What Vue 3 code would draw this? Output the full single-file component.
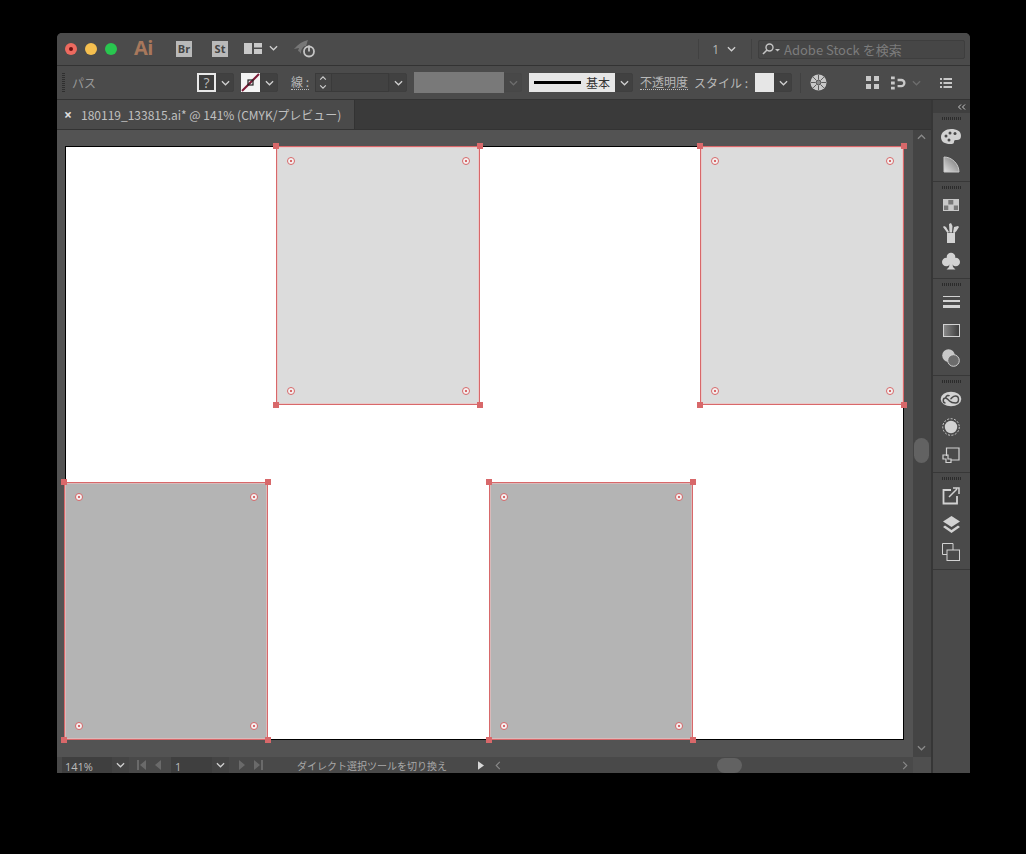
<template>
  <div class="page">
    <div class="window">
      <header class="titlebar">
        <div class="lights">
          <span class="light red"><i></i></span>
          <span class="light yellow"></span>
          <span class="light green"></span>
        </div>
        <span class="ai">Ai</span>
        <span class="app-badge br">Br</span>
        <span class="app-badge st">St</span>
        <svg class="workspace" viewBox="0 0 18 12"><path d="M0 1h8v11H0zM10 1h8v4.500h-8zM10 7h8v5h-8z" /></svg>
        <svg class="chev wsp-chev" viewBox="0 0 10 6"><path d="M1 1l4 4 4-4" /></svg>
        <svg class="rocket" viewBox="0 0 24 20">
          <path d="M1 10C5 5 10 2 15 1c-1 2-1 4-2 6-2 0-3 1-4 3-1 1-1 3-1 5-1-2-2-3-3-3l1-3z" fill="#777" />
          <circle cx="16" cy="12.500" r="5" fill="none" stroke="#c4c4c4" stroke-width="1.800" />
          <path d="M16 6.500v6" stroke="#c4c4c4" stroke-width="1.800" />
        </svg>
        <div class="title-right">
          <span class="vsep"></span>
          <span class="doc-count">1</span>
          <svg class="chev" viewBox="0 0 10 6"><path d="M1 1l4 4 4-4" /></svg>
          <span class="vsep second"></span>
          <label class="search">
            <svg class="search-icon" viewBox="0 0 18 12">
              <circle cx="7.500" cy="4.500" r="3.500" fill="none" stroke="#c4c4c4" stroke-width="1.400" />
              <path d="M5 7l-4 4" stroke="#c4c4c4" stroke-width="1.600" />
              <path d="M13 6h5l-2.500 2.500z" fill="#c4c4c4" />
            </svg>
            <span>Adobe Stock を検索</span>
          </label>
        </div>
      </header>

      <div class="controlbar">
        <span class="grip"></span>
        <span class="path-label">パス</span>
        <span class="fill-box">?</span>
        <span class="select-btn"><svg class="chev" viewBox="0 0 10 6"><path d="M1 1l4 4 4-4" /></svg></span>
        <span class="stroke-box">
          <svg viewBox="0 0 19 19">
            <path d="M1 18L18 1" stroke="#7c1a36" stroke-width="2" />
            <rect x="7" y="7" width="5" height="5" fill="none" stroke="#222" stroke-width="1.200" />
          </svg>
        </span>
        <span class="select-btn"><svg class="chev" viewBox="0 0 10 6"><path d="M1 1l4 4 4-4" /></svg></span>
        <span class="dotted stroke-label">線 :</span>
        <span class="spinner">
          <svg viewBox="0 0 10 18"><path d="M2 6l3-3 3 3M2 12l3 3 3-3" /></svg>
        </span>
        <span class="stroke-input"></span>
        <span class="select-btn"><svg class="chev" viewBox="0 0 10 6"><path d="M1 1l4 4 4-4" /></svg></span>
        <span class="profile-box"></span>
        <span class="select-btn disabled"><svg class="chev" viewBox="0 0 10 6"><path d="M1 1l4 4 4-4" /></svg></span>
        <span class="brush-box"><i></i><b>基本</b></span>
        <span class="select-btn"><svg class="chev" viewBox="0 0 10 6"><path d="M1 1l4 4 4-4" /></svg></span>
        <span class="dotted opacity-label">不透明度</span>
        <span class="style-label">スタイル :</span>
        <span class="style-box"></span>
        <span class="select-btn"><svg class="chev" viewBox="0 0 10 6"><path d="M1 1l4 4 4-4" /></svg></span>
        <span class="vsep bar-sep"></span>
        <svg class="globe" viewBox="0 0 18 18">
          <circle cx="9" cy="9" r="8.500" fill="#c8c8c8" />
          <g stroke="#555" stroke-width="1">
            <circle cx="9" cy="9" r="2.500" fill="#8a8a8a" />
            <path d="M9 1v5M9 12v5M1 9h5M12 9h5M3.300 3.300l3.500 3.500M11.200 11.200l3.500 3.500M14.700 3.300l-3.500 3.500M6.800 11.200l-3.500 3.500" />
          </g>
        </svg>
        <svg class="align-a" viewBox="0 0 14 14">
          <path d="M0 0h5v5H0zM8 0h5v5H8zM0 8h5v5H0zM8 8h5v5H8z" fill="#c8c8c8" />
          <path d="M6.500 0v14M0 6.500h14" stroke="#4a4a4a" stroke-width="1" />
        </svg>
        <svg class="align-b" viewBox="0 0 16 14">
          <path d="M0 0h4v3H0zM0 5.500h4v3H0zM0 11h4v3H0z" fill="#c8c8c8" />
          <path d="M7 2.500h4a4.500 4.500 0 0 1 0 9H7v-2.500h4a2 2 0 0 0 0-4H7z" fill="#c8c8c8" />
        </svg>
        <svg class="chev dim-chev" viewBox="0 0 10 6"><path d="M1 1l4 4 4-4" /></svg>
        <svg class="menu-icon" viewBox="0 0 12 10">
          <path d="M0 0h2v2H0zM0 4h2v2H0zM0 8h2v2H0zM3.500 0H12v2H3.500zM3.500 4H12v2H3.500zM3.500 8H12v2H3.500z" fill="#c8c8c8" />
        </svg>
      </div>

      <div class="workarea">
        <div class="doc-column">
          <div class="tabs">
            <div class="tab">
              <span class="tab-close">×</span>
              <span>180119_133815.ai* @ 141% (CMYK/プレビュー)</span>
            </div>
          </div>

          <div class="view-row">
            <div class="canvas">
              <div class="artboard">
                <div
                  v-for="shape in shapes"
                  :key="shape.id"
                  class="shape"
                  :class="shape.tone"
                  :style="{ left: shape.x + 'px', top: shape.y + 'px' }"
                >
                  <span class="handle tl"></span>
                  <span class="handle tr"></span>
                  <span class="handle bl"></span>
                  <span class="handle br-h"></span>
                  <span class="widget w-tl"></span>
                  <span class="widget w-tr"></span>
                  <span class="widget w-bl"></span>
                  <span class="widget w-br"></span>
                </div>
              </div>
            </div>
            <div class="v-scroll">
              <svg class="chev scroll-up" viewBox="0 0 10 6"><path d="M1 5l4-4 4 4" /></svg>
              <span class="v-thumb"></span>
              <svg class="chev scroll-down" viewBox="0 0 10 6"><path d="M1 1l4 4 4-4" /></svg>
            </div>
          </div>

          <footer class="statusbar">
            <span class="zoom-field">141%</span>
            <span class="status-btn"><svg class="chev" viewBox="0 0 10 6"><path d="M1 1l4 4 4-4" /></svg></span>
            <svg class="nav-icon nav-prev" viewBox="0 0 26 10"><path d="M0 0h2v10H0zM9 0v10L3 5zM24 0v10l-6-5z" /></svg>
            <span class="page-field">1</span>
            <span class="status-btn"><svg class="chev" viewBox="0 0 10 6"><path d="M1 1l4 4 4-4" /></svg></span>
            <svg class="nav-icon nav-next" viewBox="0 0 26 10"><path d="M0 0v10l6-5zM15 0v10l6-5zM22 0h2v10h-2z" /></svg>
            <span class="status-text">ダイレクト選択ツールを切り換え</span>
            <svg class="status-play" viewBox="0 0 7 10"><path d="M0 0l7 5-7 5z" /></svg>
            <div class="h-scroll">
              <svg class="side-chev" viewBox="0 0 6 10"><path d="M5 1L1 5l4 4" /></svg>
              <span class="h-thumb"></span>
              <svg class="side-chev" viewBox="0 0 6 10"><path d="M1 1l4 4-4 4" /></svg>
            </div>
            <span class="corner"></span>
          </footer>
        </div>

        <aside class="panel-dock">
          <div class="dock-top">
            <svg viewBox="0 0 9 6"><path d="M4 0.500L1.500 3 4 5.500M8 0.500L5.500 3 8 5.500" /></svg>
          </div>

          <div class="dock-group">
            <span class="grip-h"></span>
            <div class="dock-icon">
              <svg width="20" height="17" viewBox="0 0 20 17">
                <path d="M0 9C0 4 5 1 10 1c6 0 10 2 10 7 0 3-2 4-4 4s-3 0-3 2-2 2-4 2C4 16 0 14 0 9z" fill="#d2d2d2" />
                <circle cx="5" cy="8" r="1.500" fill="#4a4a4a" />
                <circle cx="9" cy="5" r="1.500" fill="#4a4a4a" />
                <circle cx="14" cy="5.500" r="1.500" fill="#4a4a4a" />
                <circle cx="8" cy="12" r="1.500" fill="#4a4a4a" />
              </svg>
            </div>
            <div class="dock-icon">
              <svg width="17" height="17" viewBox="0 0 17 17">
                <defs>
                  <linearGradient id="wheel" x1="0" y1="1" x2="1" y2="0">
                    <stop offset="0" stop-color="#e0e0e0" />
                    <stop offset="1" stop-color="#6e6e6e" />
                  </linearGradient>
                </defs>
                <path d="M1 1c8 0 15 7 15 15H1z" fill="url(#wheel)" stroke="#c8c8c8" stroke-width="1" />
              </svg>
            </div>
          </div>

          <div class="dock-group">
            <span class="grip-h"></span>
            <div class="dock-icon">
              <svg width="16" height="12" viewBox="0 0 16 12">
                <path d="M0 0h16v12H0z" fill="#c8c8c8" />
                <path d="M5.300 1h5v4.500h-5zM1 6.500h4.300V11H1zM10.800 6.500H15V11h-4.200z" fill="#777" />
              </svg>
            </div>
            <div class="dock-icon">
              <svg width="16" height="20" viewBox="0 0 16 20">
                <path d="M4 10h8v10H4z" fill="#d2d2d2" />
                <path d="M4.500 10L0 4l1-1 2 1 3 5zM6.500 9.500L6 1l2-1 1.500 3L9 9.500zM10 9.500L11 4l4-1 1 1-2.500 4-2 2z" fill="#d2d2d2" />
              </svg>
            </div>
            <div class="dock-icon">
              <svg width="18" height="18" viewBox="0 0 18 18">
                <circle cx="9" cy="5" r="4.300" fill="#d2d2d2" />
                <circle cx="4.300" cy="10" r="4.300" fill="#d2d2d2" />
                <circle cx="13.700" cy="10" r="4.300" fill="#d2d2d2" />
                <path d="M8 9h2l1 6 2.500 2.500h-9L7 15z" fill="#d2d2d2" />
              </svg>
            </div>
          </div>

          <div class="dock-group">
            <span class="grip-h"></span>
            <div class="dock-icon">
              <svg width="17" height="12" viewBox="0 0 17 12">
                <path d="M0 0h17v1H0zM0 4h17v2H0zM0 9h17v3H0z" fill="#d2d2d2" />
              </svg>
            </div>
            <div class="dock-icon">
              <svg width="17" height="13" viewBox="0 0 17 13">
                <defs>
                  <linearGradient id="grad" x1="0" x2="1" y1="0" y2="0">
                    <stop offset="0" stop-color="#8a8a8a" />
                    <stop offset="1" stop-color="#3c3c3c" />
                  </linearGradient>
                </defs>
                <rect x="0.500" y="0.500" width="16" height="12" fill="url(#grad)" stroke="#d2d2d2" />
              </svg>
            </div>
            <div class="dock-icon">
              <svg width="18" height="18" viewBox="0 0 18 18">
                <circle cx="6.500" cy="6.500" r="6.300" fill="#c8c8c8" />
                <circle cx="11.500" cy="11.500" r="5.800" fill="#6c6c6c" stroke="#d2d2d2" stroke-width="1" />
              </svg>
            </div>
          </div>

          <div class="dock-group">
            <span class="grip-h"></span>
            <div class="dock-icon">
              <svg width="22" height="16" viewBox="0 0 22 16">
                <ellipse cx="11" cy="8" rx="10.300" ry="7.300" fill="#d2d2d2" />
                <path d="M5.500 12c-3 0-3-5 0-5 1 0 2 1 4 3s3 2 6 2c4 0 4-7 0-7-3 0-3 2-5 3M9.500 5c-1-1-3-1-4 2" fill="none" stroke="#4a4a4a" stroke-width="1.500" />
              </svg>
            </div>
            <div class="dock-icon">
              <svg width="18" height="18" viewBox="0 0 18 18">
                <circle cx="9" cy="9" r="6.200" fill="#d2d2d2" />
                <circle cx="9" cy="9" r="8.300" fill="none" stroke="#c8c8c8" stroke-width="1" stroke-dasharray="2 1.500" />
              </svg>
            </div>
            <div class="dock-icon">
              <svg width="18" height="16" viewBox="0 0 18 16">
                <path d="M4.500 9V1H17v12H9" fill="none" stroke="#d2d2d2" stroke-width="1.200" />
                <path d="M1 8h5v4h3v3.500H4V12H1z" fill="none" stroke="#d2d2d2" stroke-width="1.200" />
              </svg>
            </div>
          </div>

          <div class="dock-group">
            <span class="grip-h"></span>
            <div class="dock-icon">
              <svg width="18" height="18" viewBox="0 0 18 18">
                <path d="M9 3H1.500v13.500H15V9" fill="none" stroke="#d2d2d2" stroke-width="1.800" />
                <path d="M7 10L15 2M11 1h6v6" fill="none" stroke="#d2d2d2" stroke-width="1.500" />
              </svg>
            </div>
            <div class="dock-icon">
              <svg width="17" height="17" viewBox="0 0 17 17">
                <path d="M8.500 0L17 5.500 8.500 11 0 5.500z" fill="#d2d2d2" />
                <path d="M2 9.500l6.500 4.500 6.500-4.500 2 1.500-8.500 6L0 11z" fill="#d2d2d2" />
              </svg>
            </div>
            <div class="dock-icon">
              <svg width="18" height="18" viewBox="0 0 18 18">
                <path d="M5 11.500H0.500V0.500H11V7" fill="none" stroke="#d2d2d2" stroke-width="1" />
                <rect x="5" y="7" width="12.500" height="10.500" fill="none" stroke="#d2d2d2" stroke-width="1" />
              </svg>
            </div>
          </div>
        </aside>
      </div>
    </div>
  </div>
</template>

<script setup>
const shapes = [
  { id: 1, x: 210, y: -1, tone: 'tone-pale' },
  { id: 2, x: 634, y: -1, tone: 'tone-pale' },
  { id: 3, x: -2, y: 335, tone: 'tone-mid' },
  { id: 4, x: 423, y: 335, tone: 'tone-mid' }
]
</script>

<style>
html,
body {
  margin: 0;
  background: #000;
}
</style>

<style scoped>
.page {
  width: 1026px;
  height: 854px;
  padding: 33px 56px 0 57px;
  box-sizing: border-box;
  background: #000;
  font-family: "Noto Sans CJK JP", "Open Sans", sans-serif;
  color: #b8b8b8;
  overflow: hidden;
}
.window {
  width: 913px;
  height: 740px;
  border-radius: 5px 5px 0 0;
  overflow: hidden;
  background: #4a4a4a;
  display: flex;
  flex-direction: column;
}
svg {
  display: block;
  flex: none;
}
.chev {
  width: 9px;
  height: 6px;
}
.chev path {
  fill: none;
  stroke: #d0d0d0;
  stroke-width: 1.400;
}

/* title bar */
.titlebar {
  height: 33px;
  box-sizing: border-box;
  display: flex;
  align-items: center;
  flex: none;
  border-bottom: 1px solid #333;
  background: #4b4b4b;
}
.lights {
  display: flex;
  gap: 8px;
  margin-left: 8px;
}
.light {
  width: 12px;
  height: 12px;
  border-radius: 50%;
  display: flex;
  align-items: center;
  justify-content: center;
}
.light i {
  width: 4px;
  height: 4px;
  border-radius: 50%;
  background: #6e0f10;
}
.red { background: #ed6a5f; }
.yellow { background: #f5bf4f; }
.green { background: #29c64f; }
.ai {
  margin: -4px 0 0 17px;
  width: 22px;
  font: 700 20px "Open Sans", sans-serif;
  color: #a8785c;
  letter-spacing: -0.500px;
}
.app-badge {
  width: 16px;
  height: 16px;
  background: #b9b9b9;
  color: #444;
  font: 700 11px/16px "Open Sans", sans-serif;
  text-align: center;
}
.br { margin-left: 20px; }
.st { margin-left: 20px; }
.workspace {
  width: 18px;
  height: 12px;
  margin: -3px 0 0 16px;
  fill: #c9c9c9;
}
.wsp-chev {
  margin: -3px 0 0 7px;
}
.rocket {
  width: 24px;
  height: 20px;
  margin-left: 15px;
}
.title-right {
  margin-left: auto;
  display: flex;
  align-items: center;
  padding-right: 5px;
}
.vsep {
  width: 1px;
  height: 20px;
  background: #414141;
}
.doc-count {
  margin: 0 8px 0 13px;
  font: 12px "Open Sans", sans-serif;
  color: #b8b8b8;
}
.vsep.second {
  margin-left: 15px;
}
.search {
  width: 207px;
  height: 19px;
  margin-left: 6px;
  box-sizing: border-box;
  display: flex;
  align-items: center;
  border: 1px solid #3e3e3e;
  border-radius: 2px;
  background: #464646;
  color: #7c7c7c;
  font-size: 13px;
}
.search-icon {
  width: 18px;
  height: 12px;
  margin: 0 4px 0 3px;
}

/* control bar */
.controlbar {
  height: 34px;
  box-sizing: border-box;
  display: flex;
  align-items: center;
  flex: none;
  padding-left: 5px;
  border-bottom: 1px solid #333;
  background: #4b4b4b;
  font-size: 12px;
}
.grip {
  width: 3px;
  height: 20px;
  background: repeating-linear-gradient(#2f2f2f 0 1px, transparent 1px 2px);
}
.path-label {
  margin-left: 7px;
  width: 125px;
  color: #999;
}
.fill-box {
  width: 19px;
  height: 19px;
  box-sizing: border-box;
  border: 2px solid #e8e8e8;
  background: #3d3d3d;
  color: #bbb;
  font: 14px/15px "Open Sans", sans-serif;
  text-align: center;
}
.select-btn {
  width: 18px;
  height: 19px;
  box-sizing: border-box;
  display: flex;
  align-items: center;
  justify-content: center;
  border: 1px solid #3f3f3f;
  border-radius: 0 2px 2px 0;
  background: #414141;
}
.select-btn.disabled {
  border-color: #474747;
  background: #484848;
}
.select-btn.disabled .chev path {
  stroke: #6d6d6d;
}
.stroke-box {
  width: 19px;
  height: 19px;
  margin-left: 7px;
  background: #f4f4f4;
}
.stroke-box svg {
  width: 19px;
  height: 19px;
}
.dotted {
  border-bottom: 1px dotted #bbb;
  line-height: 14px;
}
.stroke-label {
  margin-left: 13px;
}
.spinner {
  width: 17px;
  height: 19px;
  margin-left: 6px;
  box-sizing: border-box;
  border: 1px solid #3a3a3a;
  background: #454545;
}
.spinner svg {
  width: 10px;
  height: 17px;
  margin-left: 2px;
}
.spinner path {
  fill: none;
  stroke: #d0d0d0;
  stroke-width: 1.200;
}
.stroke-input {
  width: 57px;
  height: 19px;
  box-sizing: border-box;
  border: 1px solid #3a3a3a;
  border-left: 0;
  background: #424242;
}
.profile-box {
  width: 90px;
  height: 21px;
  margin-left: 7px;
  background: #797979;
}
.brush-box {
  width: 86px;
  height: 19px;
  margin-left: 7px;
  padding: 0 5px;
  box-sizing: border-box;
  display: flex;
  align-items: center;
  background: #e6e6e6;
  color: #333;
}
.brush-box i {
  width: 47px;
  height: 3px;
  background: #000;
}
.brush-box b {
  margin-left: 5px;
  font-weight: 400;
}
.opacity-label {
  margin-left: 7px;
}
.style-label {
  margin-left: 6px;
  width: 61px;
  white-space: nowrap;
}
.style-box {
  width: 19px;
  height: 19px;
  background: #e6e6e6;
}
.bar-sep {
  height: 20px;
  margin-left: 8px;
}
.globe {
  width: 17px;
  height: 17px;
  margin-left: 9px;
}
.align-a {
  width: 14px;
  height: 14px;
  margin-left: 39px;
}
.align-b {
  width: 15px;
  height: 14px;
  margin-left: 11px;
}
.dim-chev {
  margin-left: 6px;
}
.dim-chev path {
  stroke: #6d6d6d;
}
.menu-icon {
  width: 12px;
  height: 10px;
  margin-left: 19px;
}

/* document area */
.workarea {
  flex: 1;
  min-height: 0;
  display: flex;
}
.doc-column {
  flex: 1;
  min-width: 0;
  display: flex;
  flex-direction: column;
}
.tabs {
  height: 30px;
  flex: none;
  box-sizing: border-box;
  display: flex;
  background: #3a3a3a;
  border-bottom: 1px solid #333;
}
.tab {
  width: 298px;
  box-sizing: border-box;
  padding-left: 7px;
  display: flex;
  align-items: center;
  gap: 9px;
  background: #4a4a4a;
  border-right: 1px solid #333;
  font-size: 12px;
  color: #c0c0c0;
  white-space: nowrap;
}
.tab-close {
  font-family: "Open Sans", sans-serif;
  font-size: 14px;
  font-weight: 700;
  color: #ddd;
}
.view-row {
  flex: 1;
  min-height: 0;
  display: flex;
}
.canvas {
  flex: 1;
  padding: 17px 0 0 9px;
  background: #535353;
}
.artboard {
  position: relative;
  width: 837px;
  height: 592px;
  background: #fff;
  box-shadow: 0 0 0 1px #000;
}
.shape {
  position: absolute;
  width: 204px;
  height: 258px;
  box-sizing: border-box;
  border: 1px solid #d8686a;
  box-shadow: inset 0 0 0 1px rgba(240, 190, 190, 0.6);
}
.tone-pale {
  height: 259px;
  background: #dcdcdc;
}
.tone-mid { background: #b4b4b4; }
.handle {
  position: absolute;
  width: 6px;
  height: 6px;
  background: #d8686a;
}
.tl { left: -4px; top: -4px; }
.tr { right: -4px; top: -4px; }
.bl { left: -4px; bottom: -4px; }
.br-h { right: -4px; bottom: -4px; }
.widget {
  position: absolute;
  width: 8px;
  height: 8px;
  box-sizing: border-box;
  border: 1px solid #d8686a;
  border-radius: 50%;
  background: radial-gradient(circle, #d8686a 0 1.200px, #f4f4f4 1.600px);
}
.w-tl { left: 10px; top: 10px; }
.w-tr { right: 9px; top: 10px; }
.w-bl { left: 10px; bottom: 9px; }
.w-br { right: 9px; bottom: 9px; }
.v-scroll {
  position: relative;
  width: 18px;
  flex: none;
  background: #444;
}
.scroll-up {
  position: absolute;
  left: 4px;
  top: 4px;
}
.scroll-down {
  position: absolute;
  left: 4px;
  bottom: 6px;
}
.scroll-up path,
.scroll-down path {
  stroke: #8a8a8a;
}
.v-thumb {
  position: absolute;
  left: 1px;
  top: 308px;
  width: 15px;
  height: 25px;
  border-radius: 8px;
  background: #626262;
}
.statusbar {
  height: 16px;
  flex: none;
  display: flex;
  align-items: center;
  background: #494949;
  font-size: 10px;
  overflow: hidden;
  color: #a8a8a8;
}
.zoom-field {
  width: 50px;
  height: 16px;
  margin-left: 5px;
  padding-left: 3px;
  box-sizing: border-box;
  background: #3f3f3f;
  font: 11px/20px "Open Sans", sans-serif;
  color: #bbb;
}
.status-btn {
  width: 17px;
  height: 16px;
  display: flex;
  align-items: center;
  justify-content: center;
  background: #444;
}
.nav-icon {
  width: 26px;
  height: 10px;
  fill: #6a6a6a;
}
.nav-prev {
  margin: 0 8px 0 8px;
}
.page-field {
  width: 41px;
  height: 16px;
  padding-left: 4px;
  box-sizing: border-box;
  background: #3f3f3f;
  font: 11px/20px "Open Sans", sans-serif;
  color: #bbb;
}
.nav-next {
  margin: 0 0 0 10px;
}
.status-text {
  width: 181px;
  margin-left: 32px;
  white-space: nowrap;
}
.status-play {
  width: 6px;
  height: 9px;
  fill: #d8d8d8;
}
.h-scroll {
  flex: 1;
  height: 16px;
  margin-left: 8px;
  padding: 0 5px 0 3px;
  display: flex;
  align-items: center;
  justify-content: space-between;
  position: relative;
  background: #494949;
}
.side-chev {
  width: 6px;
  height: 9px;
}
.side-chev path {
  fill: none;
  stroke: #8a8a8a;
  stroke-width: 1.200;
}
.h-thumb {
  position: absolute;
  left: 225px;
  top: 1px;
  width: 25px;
  height: 15px;
  border-radius: 8px;
  background: #626262;
}
.corner {
  width: 18px;
  height: 16px;
  background: #4f4f4f;
}

/* right dock */
.panel-dock {
  width: 39px;
  flex: none;
  box-sizing: border-box;
  border-left: 2px solid #363636;
  background: #4a4a4a;
}
.dock-top {
  height: 13px;
  box-sizing: border-box;
  padding-left: 24px;
  padding-top: 4px;
  background: #3f3f3f;
}
.dock-top svg {
  width: 9px;
  height: 6px;
}
.dock-top path {
  fill: none;
  stroke: #c8c8c8;
  stroke-width: 1;
}
.dock-group {
  padding: 4px 0 3px;
  border-bottom: 1px solid #383838;
}
.grip-h {
  display: block;
  width: 20px;
  height: 3px;
  margin: 0 auto 2px;
  background: repeating-linear-gradient(90deg, #2b2b2b 0 1px, transparent 1px 2px);
}
.dock-icon {
  height: 28px;
  padding-right: 1px;
  display: flex;
  align-items: center;
  justify-content: center;
}
</style>
